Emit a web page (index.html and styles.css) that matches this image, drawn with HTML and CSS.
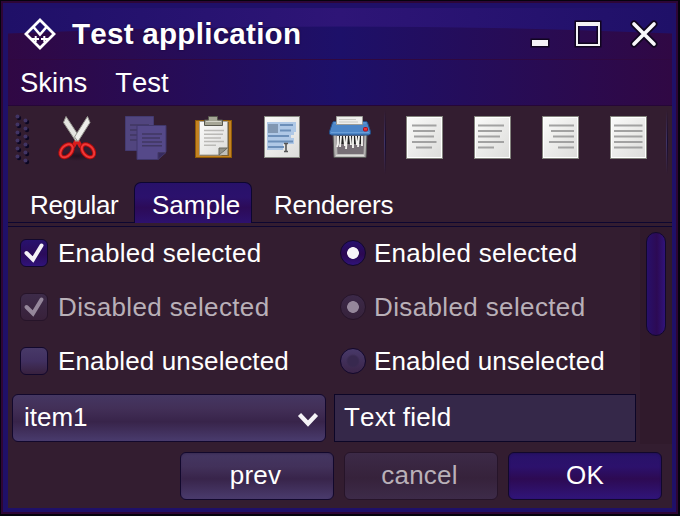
FILE: index.html
```html
<!DOCTYPE html>
<html lang="en">
<head>
<meta charset="utf-8">
<title>Test application</title>
<link rel="stylesheet" href="styles.css">
</head>
<body>
<div class="window">
  <header class="titlebar">
    <svg class="glow" viewBox="0 0 664 51" preserveAspectRatio="none" aria-hidden="true">
      <defs><linearGradient id="shine"><stop offset="0" stop-color="#1f1068"/><stop offset=".5" stop-color="#2e1577"/><stop offset="1" stop-color="#1f1068"/></linearGradient></defs>
      <path d="M0 0H664V25.500Q332 11.500 0 25.500Z" fill="url(#shine)"/>
    </svg>
    <svg class="logo" viewBox="0 0 32 32" fill="none" stroke="#fff" stroke-width="2.800"><path d="M16 2L30 16L16 30L2 16Z"/><path d="M9.500 9L16 16.500L22.500 9" stroke-width="2.600"/><path d="M11.700 18v6M8 21h7M20.300 18v6M17 21h7" stroke-width="2"/></svg>
    <h1 class="title">Test application</h1>
    <div class="controls">
      <svg viewBox="0 0 128 34"><g stroke="#10051f" fill="none"><path d="M5.500 23.500h17v7h-17z" fill="#f4f2f6" stroke-width="2"/><path d="M51 7h22v22H51z" stroke-width="5"/><path d="M108 8l20 20M128 8l-20 20" stroke-width="7" stroke-linecap="round"/></g><path d="M6 24h16v6H6z" fill="#f4f2f6"/><path d="M50 6h24v24H50zM52 10v18h20V10z" fill="#f4f2f6" fill-rule="evenodd"/><path d="M108 8l20 20M128 8l-20 20" stroke="#f8f8fa" stroke-width="3.700" stroke-linecap="round"/></svg>
    </div>
  </header>
  <nav class="menu"><span>Skins</span><span>Test</span></nav>
  <div class="toolbar">
    <svg class="grip" viewBox="0 0 16 54"><g fill="#0c0722"><circle cx="4" cy="5" r="2.200"/><circle cx="4" cy="13" r="2.200"/><circle cx="4" cy="21" r="2.200"/><circle cx="4" cy="29" r="2.200"/><circle cx="4" cy="37" r="2.200"/><circle cx="4" cy="45" r="2.200"/><circle cx="12" cy="9" r="2.200"/><circle cx="12" cy="17" r="2.200"/><circle cx="12" cy="25" r="2.200"/><circle cx="12" cy="33" r="2.200"/><circle cx="12" cy="41" r="2.200"/><circle cx="12" cy="49" r="2.200"/></g><g fill="#413464"><circle cx="2.500" cy="3.500" r="2"/><circle cx="2.500" cy="11.500" r="2"/><circle cx="2.500" cy="19.500" r="2"/><circle cx="2.500" cy="27.500" r="2"/><circle cx="2.500" cy="35.500" r="2"/><circle cx="2.500" cy="43.500" r="2"/><circle cx="10.500" cy="7.500" r="2"/><circle cx="10.500" cy="15.500" r="2"/><circle cx="10.500" cy="23.500" r="2"/><circle cx="10.500" cy="31.500" r="2"/><circle cx="10.500" cy="39.500" r="2"/><circle cx="10.500" cy="47.500" r="2"/></g></svg>
    <svg class="tool" viewBox="0 0 48 48">
      <defs>
        <linearGradient id="paper" x2="1" y2="1"><stop stop-color="#fbfbfa"/><stop offset="1" stop-color="#dcdcda"/></linearGradient>
        <radialGradient id="shade"><stop stop-color="#1a0c1a" stop-opacity=".7"/><stop offset="1" stop-color="#1a0c1a" stop-opacity="0"/></radialGradient>
      </defs>
      <ellipse cx="24" cy="42" rx="20" ry="5" fill="url(#shade)"/>
      <path d="M20 33L23.500 26.500h1L28 33" fill="none" stroke="#d81c1c" stroke-width="4"/>
      <path d="M10.500 8.500L13 2.500L26.500 23L23 27.500Z" fill="#e4e4e0" stroke="#96968f"/>
      <path d="M37 8.500L34.500 2.500L21.500 23L25 27.500Z" fill="#eeeeea" stroke="#96968f"/>
      <g fill="none"><g stroke="#b40c0c" stroke-width="4"><ellipse cx="13.500" cy="36.800" rx="7.500" ry="5" transform="rotate(-48 13.500 36.800)"/><ellipse cx="35" cy="36.800" rx="7.500" ry="5" transform="rotate(48 35 36.800)"/></g><g stroke="#f03838" stroke-width="2"><ellipse cx="13.500" cy="36.800" rx="7.500" ry="5" transform="rotate(-48 13.500 36.800)"/><ellipse cx="35" cy="36.800" rx="7.500" ry="5" transform="rotate(48 35 36.800)"/></g></g>
    </svg>
    <svg class="tool" viewBox="0 0 48 48">
      <path d="M4.500 2.500h28v34h-28z" fill="#51457f" stroke="#433a70"/>
      <path d="M9 11h19M9 16h19M9 21h17M9 26h15" stroke="#403762" stroke-width="1.600"/>
      <path d="M16 11.500h29v26l-8 8H16z" fill="#554989" stroke="#40376a"/>
      <path d="M45 38.500h-8v7z" fill="#372b5e" stroke="#433866"/>
      <path d="M21 20h20M21 24h18M21 28h20M21 31.700h20" stroke="#403762" stroke-width="1.600"/>
    </svg>
    <svg class="tool" viewBox="0 0 48 48">
      <rect x="6.500" y="6.500" width="36" height="37" fill="#c38222" stroke="#8d5906"/>
      <path d="M11 8h29v34H11z" fill="#7d6132"/>
      <path d="M10.500 7.500h28V35l-6 6H10.500z" fill="url(#paper)" stroke="#a7a398"/>
      <path d="M30 41v-7h8.500z" fill="#929289" stroke="#686861"/><path d="M32 41l6.500-6.500V41z" fill="#c0c0ba"/>
      <path d="M15 16.500h20M15 20.200h19M15 24h17M15 27.500h20M15 31.200h12" stroke="#bab9b6" stroke-width="1.500"/>
      <path d="M19.500 6V2.500h9V6h5v5.500h-18V6z" fill="#a6a696" stroke="#59594f"/><path d="M17 7.500h15" stroke="#d4d4c8"/>
    </svg>
    <svg class="tool" viewBox="0 0 48 48">
      <rect x="7.500" y="2.500" width="35" height="41" fill="url(#paper)" stroke="#888a83"/>
      <path d="M10 8h29v10h-2v3h-3v3h3v6h-11v6H10z" fill="#afc8e6"/>
      <path d="M11 10h10v9H11z" fill="#8197b2"/>
      <path d="M23 11h13M23 16.500h11M11 22h21M11 27.500h25M11 33h16" stroke="#6c8fb9" stroke-width="1.900"/>
      <path d="M27 29.500h4M29 29.500v8M27 37.500h4" stroke="#555" stroke-width="1.600"/>
    </svg>
    <svg class="tool" viewBox="0 0 48 48">
      <path d="M8 20h34l-1 23.500H9z" fill="#b3b1b0" stroke="#555"/><path d="M11.500 21h28l-1 19H12.500z" fill="#776f76"/><path d="M11 41.500h28" stroke="#dededb" stroke-width="1.600"/>
      <path d="M13 22h25v8H13z" fill="#222"/>
      <path d="M13 22v8l-1 3M16 22l-1 11M19 22l1 10M22 22l-1 13M25 22l1 9M28 22v12M31 22l1 9M34 22l-1 11M37 22v10" fill="none" stroke="#f3f2ef" stroke-width="1.900"/>
      <path d="M7.500 8.500q.5-1 1.500-1h32q1 0 1.500 1l3 9V20l-2 1h-37l-2-1v-2.500z" fill="#4d86c8" stroke="#234e87"/>
      <path d="M9 9h32M6 18.500h38" stroke="#699ed8"/>
      <path d="M12 9.500h26" stroke="#26344a" stroke-width="3"/>
      <path d="M11.500 10.500v-8h26v8z" fill="#efefed" stroke="#9c9c97"/><path d="M14 5.500h17M14 8h19" stroke="#c9c9c5"/>
      <rect x="38.500" y="13.500" width="4" height="3.500" rx="1" fill="#ed3434" stroke="#a90e21"/>
    </svg>
    <i class="rule"></i>
    <svg class="tool" viewBox="0 0 48 48"><rect class="sheet" x="6.500" y="2.500" width="36" height="42"/><rect class="edge" x="7.500" y="3.500" width="34" height="40"/><path class="lines" d="M12 11.500h24.500M13 17h22M14 22.500h20M12 28h24.500M16 33.500h16"/></svg>
    <svg class="tool" viewBox="0 0 48 48"><rect class="sheet" x="6.500" y="2.500" width="36" height="42"/><rect class="edge" x="7.500" y="3.500" width="34" height="40"/><path class="lines" d="M10 11.500h26M10 17h24M10 22.500h22M10 28h26M10 33.500h16"/></svg>
    <svg class="tool" viewBox="0 0 48 48"><rect class="sheet" x="6.500" y="2.500" width="36" height="42"/><rect class="edge" x="7.500" y="3.500" width="34" height="40"/><path class="lines" d="M13 11.500h25M15 17h23M17 22.500h21M13 28h25M22 33.500h16"/></svg>
    <svg class="tool" viewBox="0 0 48 48"><rect class="sheet" x="6.500" y="2.500" width="36" height="42"/><rect class="edge" x="7.500" y="3.500" width="34" height="40"/><path class="lines" d="M10 11.500h28.500M10 17h28.500M10 22.500h28.500M10 28h28.500M10 33.500h28.500"/></svg>
    <i class="rule end"></i>
  </div>
  <div class="tabs"><span class="tab first">Regular</span><span class="tab active">Sample</span><span class="tab last">Renderers</span></div>
  <main class="panel">
    <div class="form">
      <div class="options">
        <label class="option"><span class="check on"><svg viewBox="0 0 28 28"><path d="M6.500 14L13 20.500L21.500 6.500"/></svg></span><span>Enabled selected</span></label>
        <label class="option"><span class="radio on"></span><span>Enabled selected</span></label>
        <label class="option disabled"><span class="check"><svg viewBox="0 0 28 28"><path d="M6.500 14L13 20.500L21.500 6.500"/></svg></span><span>Disabled selected</span></label>
        <label class="option disabled"><span class="radio"></span><span>Disabled selected</span></label>
        <label class="option off"><span class="check"></span><span>Enabled unselected</span></label>
        <label class="option off"><span class="radio"></span><span>Enabled unselected</span></label>
      </div>
      <div class="fields">
        <div class="combo"><span>item1</span><svg viewBox="0 0 22 18"><path d="M2.500 4.500L11 13.500L19.500 4.500"/></svg></div>
        <div class="field">Text field</div>
      </div>
    </div>
    <div class="gutter"><div class="thumb"></div></div>
  </main>
  <footer class="actions"><div class="button">prev</div><div class="button muted">cancel</div><div class="button primary">OK</div></footer>
</div>
</body>
</html>
```
FILE: styles.css
```css
* { box-sizing: border-box; }
body { margin: 0; background: #05030e; font-family: "Liberation Sans", Arial, sans-serif; font-size: 26px; font-kerning: none; color: #fff; }
.window { width: 677px; height: 513px; margin: 1px 0 0 1px; border: 2px solid #2e0636; background: #331d30; box-shadow: inset 5px 5px #1f1068, inset -4px -4px #1f1068; padding: 5px 4px 4px 5px; display: flex; flex-direction: column; overflow: hidden; }
.titlebar, .menu { flex: none; background: linear-gradient(90deg, #300844, #1d1069 50%, #300844); }
.titlebar { position: relative; height: 52px; border-bottom: 1px solid #300840; display: flex; align-items: center; padding-left: 16px; }
.glow { position: absolute; inset: 0; width: 100%; height: 51px; }
.logo { position: relative; width: 32px; height: 32px; }
.title { position: relative; margin: 0 0 0 16px; font-size: 29.6px; line-height: 36px; letter-spacing: .25px; text-shadow: 0 0 2px #150a38; white-space: nowrap; }
.controls { position: relative; margin: -1px 18px 0 auto; height: 34px; }
.controls svg { width: 128px; height: 34px; overflow: visible; display: block; }
.menu { height: 46px; border-bottom: 1px solid #260637; display: flex; gap: 28px; padding-left: 12px; font-size: 27.5px; line-height: 45px; }
.toolbar { flex: none; height: 75px; display: flex; padding: 8px 0 0 7px; }
.grip { width: 16px; height: 54px; margin: -1px 7px 0 0; }
.tool { flex: none; width: 48px; height: 48px; margin: 0 10px; }
.grip + .tool { margin-left: 15px; }
.rule { flex: none; width: 2px; height: 64px; margin: -4px 4px 0 1px; background: linear-gradient(90deg, #413466 50%, #160d32 50%); mask-image: linear-gradient(transparent, #000, transparent); }
.rule.end { margin-left: 4px; margin-right: 0; }
.sheet { fill: url(#paper); stroke: #83837d; }
.edge { fill: none; stroke: #fff; }
.lines { stroke: #a2a2a2; stroke-width: 1.900; }
.tabs { flex: none; height: 42px; display: flex; padding-top: 1px; box-shadow: inset 0 -1px #0d0630; }
.tab { line-height: 46px; white-space: nowrap; }
.first { width: 126px; padding-left: 22px; letter-spacing: -.4px; }
.active { width: 118px; padding-left: 17px; border: 1px solid #0d0630; border-bottom: 0; border-radius: 7px 7px 0 0; background: linear-gradient(#28116a, #2b116c 35%, #2c0b58 62%, #2d116e); line-height: 44px; }
.last { padding-left: 22px; letter-spacing: -.25px; }
.panel { flex: none; height: 221px; margin-top: 3px; border-top: 1px solid #0d0630; display: flex; }
.form { width: 632px; padding: 0 4px; }
.options { display: grid; grid-template-columns: 320px 1fr; grid-template-rows: repeat(3, 54px); padding-left: 8px; margin-top: -1px; }
.option { display: flex; align-items: center; letter-spacing: .25px; white-space: nowrap; }
.check { width: 28px; height: 28px; margin-right: 10px; margin-top: -1px; border: 1px solid #12082c; border-radius: 6px; background: linear-gradient(#483968, #413060 50%, #38213e); }
.check svg { display: block; width: 28px; height: 28px; margin: -1px; fill: none; stroke: #f4f2f7; stroke-width: 4; stroke-linecap: round; stroke-linejoin: miter; }
.on { background: linear-gradient(#28126e, #2b0b5a 55%, #30137a); }
.radio { width: 26px; height: 26px; margin-right: 8px; margin-top: -1px; border: 1px solid #12082c; border-radius: 50%; background: radial-gradient(circle, #38294f 0 5px, transparent 7px), linear-gradient(#483969, #3b2549); }
.radio.on { background: radial-gradient(circle, #f7f5f9 0 5.5px, transparent 6.2px), linear-gradient(#26106e, #2b0850 55%, #30137a); }
.disabled .radio { background: radial-gradient(circle, #95879b 0 5.5px, transparent 6.200px), linear-gradient(#3c2948, #36223b); }
.disabled { color: #b9b0b8; letter-spacing: .37px; }
.off { letter-spacing: .14px; }
.disabled .check, .disabled .radio { border-color: #261429; }
.disabled .check { background: linear-gradient(#3d2b49, #38213a); }
.disabled .check svg { stroke: #95879b; }
.fields { display: flex; gap: 8px; margin-top: 6px; }
.combo { width: 314px; height: 48px; border: 1px solid #12082c; border-radius: 6px; background: linear-gradient(#453762, #422f57 30%, #38244a 58%, #493b6d); padding: 0 6px 2px 11px; display: flex; align-items: center; justify-content: space-between; }
.combo svg { width: 22px; height: 18px; margin-top: 3px; fill: none; stroke: #f5f3f7; stroke-width: 4.300; }
.field { width: 302px; height: 48px; border: 1px solid #0c0627; background: #352849; line-height: 45px; padding-left: 9px; letter-spacing: .2px; }
.gutter { flex: 1; height: 217px; background: #301a2c; padding: 5px 6px; }
.thumb { width: 20px; height: 104px; border: 1px solid #12082c; border-radius: 10px; background: linear-gradient(90deg, #28106b, #2c0a54 55%, #30137a); }
.actions { display: flex; justify-content: flex-end; gap: 10px; padding: 5px 10px 0 0; }
.button { width: 154px; height: 48px; padding-right: 3px; border: 1px solid #12082c; border-radius: 6px; background: linear-gradient(#443661, #42315a 30%, #38244a 56%, #4a3b6d); line-height: 44px; text-align: center; letter-spacing: .2px; box-shadow: inset 0 1px 2px #3a2c53; }
.muted { color: #b9b0b8; border-color: #261429; background: linear-gradient(#3c2a47, #36223b 55%, #3d2b49); box-shadow: none; }
.primary { padding-right: 0; background: linear-gradient(#281269, #2c116c 30%, #2d0a53 56%, #30157a); box-shadow: inset 0 1px 2px #22105a; }
```
